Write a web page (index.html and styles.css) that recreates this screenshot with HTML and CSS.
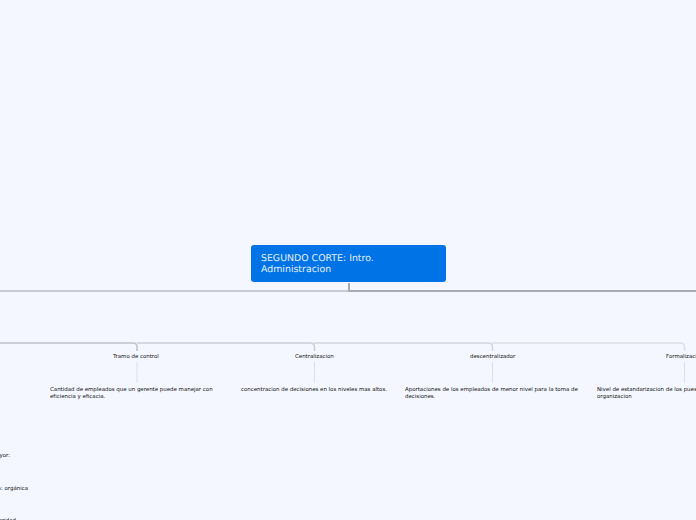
FILE: index.html
```html
<!DOCTYPE html>
<html lang="es">
<head>
<meta charset="utf-8">
<title>SEGUNDO CORTE</title>
<link rel="stylesheet" href="styles.css">
</head>
<body>
<main class="canvas">
  <svg class="links" width="696" height="520" viewBox="0 0 696 520" aria-hidden="true">
    <path class="main-left" d="M349 291H0"/>
    <path class="main-right" d="M349 283V291H696"/>
    <path class="sub s-a" d="M0 343H133Q137 343 137 347V351"/>
    <path class="sub s-b" d="M137 343H310Q314.500 343 314.500 347V351"/>
    <path class="sub s-c" d="M314 343H488Q492.500 343 492.500 347V351"/>
    <path class="sub s-d" d="M492 343H680Q684.500 343 684.500 347V351"/>
    <path class="stem" d="M137 362V383"/>
    <path class="stem" d="M314.500 362V383"/>
    <path class="stem" d="M492.500 362V383"/>
    <path class="stem" d="M684.500 362V383"/>
  </svg>
  <h1 class="root">SEGUNDO CORTE: Intro. Administracion</h1>
  <p class="node title t1">Tramo de control</p>
  <p class="node title t2">Centralizacion</p>
  <p class="node title t3">descentralizador</p>
  <p class="node title t4">Formalizacion</p>
  <p class="node desc d1">Cantidad de empleados que un gerente puede manejar con eficiencia y eficacia.</p>
  <p class="node desc d2">concentracion de decisiones en los niveles mas altos.</p>
  <p class="node desc d3">Aportaciones de los empleados de menor nivel para la toma de decisiones.</p>
  <p class="node desc d4">Nivel de estandarizacion de los puestos en la organizacion</p>
  <p class="node side s1">Mayor:</p>
  <p class="node side s2">Estructura: orgánica</p>
  <p class="node side s3">Autoridad</p>
</main>
</body>
</html>
```
FILE: styles.css
```css
html, body {
  margin: 0;
  height: 100%;
  overflow: hidden;
  background: #f4f7ff;
}
.canvas {
  position: relative;
  width: 696px;
  height: 520px;
  overflow: hidden;
  background: #f4f7ff;
  font-family: "DejaVu Sans", sans-serif;
  text-rendering: geometricPrecision;
}
.links {
  position: absolute;
  left: 0;
  top: 0;
}
.links path {
  fill: none;
}
.main-left {
  stroke: #c9cbd3;
  stroke-width: 2;
}
.main-right {
  stroke: #a9abb0;
  stroke-width: 2;
}
.sub {
  stroke-width: 1.500;
}
.s-a { stroke: #bfc1ca; }
.s-b { stroke: #cbcdd6; }
.s-c { stroke: #d3d5de; }
.s-d { stroke: #dcdee8; }
.stem {
  stroke: #dcdfe8;
  stroke-width: 1;
}
.root {
  position: absolute;
  left: 251px;
  top: 245px;
  box-sizing: border-box;
  width: 195px;
  height: 37px;
  margin: 0;
  padding: 8px 10px;
  border-radius: 3px;
  background: #0073e6;
  color: #e6f1ff;
  font-size: 9.400px;
  font-weight: 400;
  line-height: 11px;
}
.node {
  position: absolute;
  margin: 0;
  color: #111;
  font-size: 5.450px;
  line-height: 6.500px;
}
.title {
  top: 354px;
  white-space: nowrap;
}
.t1 { left: 113px; }
.t2 { left: 295px; }
.t3 { left: 470px; }
.t4 { left: 666px; }
.desc {
  top: 387px;
  width: 176px;
}
.d1 { left: 50px; }
.d2 { left: 241px; width: 160px; }
.d3 { left: 405px; }
.d4 { left: 597px; width: 150px; }
.side {
  white-space: nowrap;
}
.s1 { right: 686px; top: 453px; }
.s2 { right: 668px; top: 486px; }
.s3 { right: 680px; top: 518px; }
```
